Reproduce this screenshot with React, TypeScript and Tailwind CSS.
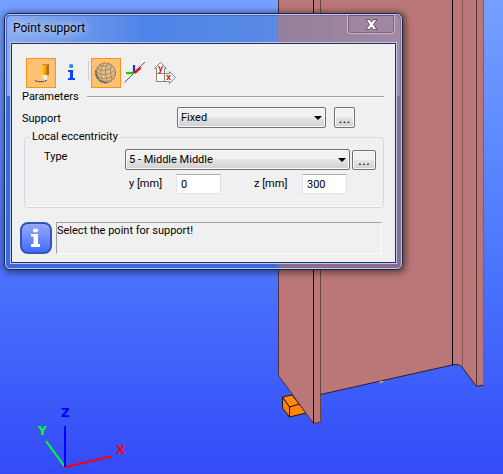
import type { ReactNode } from "react";

const face = "font-[Roboto,Tahoma,sans-serif]";

function Scene() {
  return (
    <svg
      className="absolute inset-0 h-full w-full"
      viewBox="0 0 503 474"
      preserveAspectRatio="xMinYMin slice"
      aria-label="Column with point support"
    >
      <g stroke="#2a1208" strokeWidth="1" strokeLinejoin="round">
        <path d="M282.500 397 L292 395 L300 405 L289.500 407 Z" fill="#ff8c0a" />
        <path d="M282.500 397 L289.500 407 V417 L282.500 408 Z" fill="#f98208" />
        <path d="M289.500 407 L299 404 L306 413 L289.500 417 Z" fill="#ff8400" />
      </g>
      <path
        d="M320 0 V394.500 L452 365 Q459 363.500 462 367 L476 386.500 L483.500 385 V0 Z"
        fill="#bb7777"
      />
      <path d="M278.500 0 V375 L313.500 423.500 L320.500 422 V0 Z" fill="#bb7777" />
      <g fill="none" stroke="#2c1c2c" strokeWidth="1">
        <path d="M278.500 0 V375.500 L313.500 423.500 L320.500 422" stroke="#53303a" />
        <path d="M320.500 0 V422" stroke="#6b4040" />
        <path d="M320.500 394.500 L452 365 Q459 363.500 462 367 L476.500 386.500 L483.500 385" />
        <path d="M313.500 0 V423 M452.500 0 V365" stroke="#000" />
        <path d="M462.500 0 V367" stroke="#8a5555" />
        <path d="M476.500 0 V386" stroke="#553434" />
        <path d="M483.500 0 V385" stroke="#8b5663" />
      </g>
      <path d="M379 381.500 L383.500 381 V382 L380 383 Z" fill="#f0a868" />
      <g fill="none" strokeWidth="2">
        <path d="M65 467 L111 456.500" stroke="#f00" />
        <path d="M65 467 L46 441" stroke="#0f2" />
        <path d="M65 467 V426" stroke="#00f" />
      </g>
      <g className="font-['DejaVu_Sans',Verdana,sans-serif] text-[12px] font-bold">
        <text x="61" y="417" fill="#0000f5">Z</text>
        <text x="38" y="435" fill="#0f2">Y</text>
        <text x="116" y="454" fill="#f00">X</text>
      </g>
    </svg>
  );
}

function Tool({ label, active, children }: { label: string; active?: boolean; children: ReactNode }) {
  return (
    <button
      type="button"
      aria-label={label}
      aria-pressed={!!active}
      className={
        active
          ? "h-[30px] w-[30px] border border-[#ff9214] bg-[#ffc274]"
          : "h-[30px] w-[30px]"
      }
    >
      {children}
    </button>
  );
}

function PencilIcon() {
  return (
    <svg viewBox="0 0 28 28" className="h-7 w-7">
      <path d="M8 21.500 C11 23.500 14 22.500 17 22.500" fill="none" stroke="#454545" strokeWidth="1" />
      <path d="M15 5 H18 V16 H15 Z" fill="#ffc61a" />
      <path d="M17 5 H20 V16 H17 Z" fill="#f5a300" />
      <path d="M19.500 5 H22 V16 H19.500 Z" fill="#b96a12" />
      <path d="M15 5 H22 V6 H15 Z" fill="#c98a3c" />
      <path d="M15 16 H22 L19.500 22 H17.500 Z" fill="#fbe9cc" />
      <path d="M20.500 16 H22 L19.500 22 Z" fill="#cdb79a" />
      <path d="M17.500 21 H19.800 L18.500 23 Z" fill="#41484c" />
    </svg>
  );
}

function InfoIcon() {
  return (
    <svg viewBox="0 0 30 30" className="h-[30px] w-[30px]">
      <ellipse cx="15.200" cy="8" rx="2.200" ry="2" fill="#2c83e8" />
      <path d="M12 12 H17 V20 H19 V22 H12 V20 H14 V14 H12 Z" fill="#0a43fa" />
    </svg>
  );
}

function SphereIcon() {
  return (
    <svg viewBox="0 0 28 28" className="h-7 w-7">
      <circle cx="13.500" cy="14" r="10" fill="#eabd82" stroke="#7a7060" strokeWidth="1" strokeDasharray="3 1" />
      <path
        d="M5 9 C9 13 17 12 21 7 M4 13 C9 17 18 16 23 11 M4 17 C10 21 19 20 23 15 M7 21 C13 23.500 19 22 22 19 M7 6 C10 8 15 7.500 18 5"
        fill="none" stroke="#857b69" strokeWidth="0.700"
      />
      <path
        d="M9 5 C3 12 5 18 9 22 M12 4 C7 11 8 19 13 24 M16 4 C12 11 13 19 17 23 M19 6 C18 11 19 17 20 21"
        fill="none" stroke="#857b69" strokeWidth="0.700"
      />
      <path d="M4 12 C4 19 9 24 15 23.500" fill="none" stroke="#4c4a45" strokeWidth="1.200" strokeDasharray="2 1" />
    </svg>
  );
}

function AxesIcon() {
  return (
    <svg viewBox="0 0 30 30" className="h-[30px] w-[30px]">
      <path d="M3.500 24.500 L24 4" stroke="#555" strokeWidth="1" />
      <path d="M5 15 H13" stroke="#1cc808" strokeWidth="2.200" />
      <path d="M13 7 V15" stroke="#1235ef" strokeWidth="2.200" />
      <path d="M13.500 15 L19.500 9.500" stroke="#f01024" strokeWidth="2.600" />
    </svg>
  );
}

function PlanIcon() {
  return (
    <svg viewBox="0 0 30 30" className="h-[30px] w-[30px]">
      <path
        d="M9.500 4.500 L15.500 10.500 H13.500 V15.500 H18.500 V13.500 L24.500 19.500 L18.500 25.500 V23.500 H5.500 V10.500 H3.500 Z"
        fill="#fafafa" stroke="#858585" strokeWidth="1"
      />
      <path d="M5.500 15.500 H13.500 V23.500" fill="none" stroke="#858585" strokeWidth="1" />
      <g className="font-['DejaVu_Sans',sans-serif] text-[8px] font-bold" fill="#e52505">
        <text x="7" y="13">y</text>
        <text x="15" y="22">x</text>
      </g>
    </svg>
  );
}

function Picker({ id, value }: { id: string; value: string }) {
  return (
    <div className="relative h-[21px] w-full">
      <select
        id={id}
        className="h-full w-full appearance-none rounded-xs border border-[#707070] bg-linear-to-b from-[#f2f2f2] from-45% via-[#e6e6e6] via-50% to-[#cfcfcf] pr-5 pl-[3px] leading-4 shadow-[inset_0_0_0_1px_#fafafa]"
      >
        <option>{value}</option>
      </select>
      <svg viewBox="0 0 8 4" className="pointer-events-none absolute top-[9px] right-1 h-1 w-2">
        <path d="M0 0 H8 L4 4 Z" fill="#000" />
      </svg>
    </div>
  );
}

const moreButton =
  "flex shrink-0 items-center justify-center rounded-xs border border-[#707070] bg-linear-to-b from-[#f2f2f2] from-45% via-[#e6e6e6] via-50% to-[#cfcfcf] text-[15px] leading-4 shadow-[inset_0_0_0_1px_#fafafa]";
const numberBox =
  "h-5 w-[45px] border border-[#e2e3ea] border-t-[#abadb3] bg-white pl-1 leading-4";

function Dialog() {
  return (
    <section
      aria-labelledby="dialog-title"
      className="relative mt-[13px] ml-1 w-[399px] rounded-md border border-[#1c2748] bg-linear-to-r from-[#3c68e2] from-68% to-[#8a6c8c] to-70% shadow-[1px_1px_6px_2px_rgba(0,0,0,0.45)]"
    >
      <div className="rounded-[5px] border border-[#b9c9ee] px-1 pb-1">
        <div className="absolute inset-x-[2px] top-[2px] h-20 rounded-t-sm bg-linear-to-r from-[#8aabef] via-[#4f84e8] via-35% to-[#5a8ae6] to-67%" />
        <div className="absolute top-[2px] right-[2px] h-20 w-[122px] rounded-tr-sm bg-linear-to-r from-[#95809c] via-[#9d839c] via-50% to-[#a38aa4]" />
        <header className="relative flex h-[27px] items-start justify-between pr-[2px] pl-[3px]">
          <h1 id="dialog-title" className="pt-1 text-[12px] leading-[18px] text-black [text-shadow:0_0_6px_#c5d8ff,0_0_10px_#c5d8ff]">
            Point support
          </h1>
          <button
            type="button"
            aria-label="Close"
            className="flex h-[19px] w-12 items-center justify-center rounded-b-sm border border-t-0 border-[#c9b6ca] shadow-[inset_0_0_0_1px_rgba(90,66,95,0.5)]"
          >
            <svg viewBox="0 0 13 11" className="h-[11px] w-[13px]">
              <path d="M1 0.500 H4.500 L6.500 3 L8.500 0.500 H12 L8.500 5.500 L12 10.500 H8.500 L6.500 8 L4.500 10.500 H1 L4.500 5.500 Z" fill="#fff" stroke="#5a4d64" strokeWidth="1" />
            </svg>
          </button>
        </header>
        <div className="relative border border-[#b9c9ee]">
          <div className="border border-[#263056] bg-[#f0f0f0] pt-[14px] pr-[11px] pb-2 pl-2">
            <div role="toolbar" aria-label="Support tools" className="flex pl-[6px]">
              <Tool label="Draw" active><PencilIcon /></Tool>
              <Tool label="Information"><InfoIcon /></Tool>
              <div className="mt-[3px] mr-[2px] ml-[2px] h-5 w-px bg-[#d0d0d0]" />
              <Tool label="Point" active><SphereIcon /></Tool>
              <Tool label="Local axes"><AxesIcon /></Tool>
              <Tool label="Plan directions"><PlanIcon /></Tool>
            </div>
            <div className="flex h-[19px] items-start gap-2 pl-[2px]">
              <h2 className="leading-[18px]">Parameters</h2>
              <div className="mt-2 h-[2px] grow border-t border-b border-t-[#a0a0a0] border-b-white" />
            </div>
            <div className="flex items-center pl-[2px]">
              <label htmlFor="support" className="w-[155px] pt-[2px] leading-4">Support</label>
              <div className="mr-2 w-[149px]"><Picker id="support" value="Fixed" /></div>
              <button type="button" aria-label="Edit support" className={`${moreButton} h-[21px] w-[21px]`}>...</button>
            </div>
            <fieldset className="mt-px ml-1 rounded-[3px] border border-[#d0dae3] pr-[7px] pb-[13px] pl-[19px] shadow-[inset_0_-1px_0_#fff]">
              <legend className="-ml-[14px] px-[2px] leading-4">Local eccentricity</legend>
              <div className="flex items-start gap-[2px] pt-1">
                <label htmlFor="type" className="w-[79px] shrink-0 leading-4">Type</label>
                <div className="grow"><Picker id="type" value="5 - Middle Middle" /></div>
                <button type="button" aria-label="Edit type" className={`${moreButton} mt-px h-5 w-6`}>...</button>
              </div>
              <div className="flex items-center pt-1 pl-[85px]">
                <label htmlFor="ecc-y" className="w-[47px] leading-4">y [mm]</label>
                <input id="ecc-y" defaultValue="0" className={numberBox} />
                <label htmlFor="ecc-z" className="ml-[33px] w-12 leading-4">z [mm]</label>
                <input id="ecc-z" defaultValue="300" className={numberBox} />
              </div>
            </fieldset>
            <div className="mt-[14px] flex gap-1 pr-[2px]">
              <svg viewBox="0 0 32 32" className="h-8 w-8 shrink-0" aria-hidden="true">
                <defs>
                  <linearGradient id="badge" x1="0" y1="0" x2="0" y2="1">
                    <stop offset="0" stopColor="#9aabff" />
                    <stop offset="1" stopColor="#4269fb" />
                  </linearGradient>
                </defs>
                <rect x="1" y="1" width="30" height="30" rx="7" fill="url(#badge)" stroke="#3457b4" strokeWidth="2" />
                <ellipse cx="15.500" cy="8.500" rx="2.700" ry="2" fill="#fff" />
                <path d="M11 12 H18 V22 H20 V25 H11 V22 H13.500 V14.500 H11 Z" fill="#fff" />
              </svg>
              <p role="status" className="h-8 grow border border-t-[#a0a0a0] border-r-white border-b-white border-l-[#a0a0a0] leading-4">
                Select the point for support!
              </p>
            </div>
          </div>
        </div>
      </div>
    </section>
  );
}

export default function App() {
  return (
    <main
      className={`relative flow-root min-h-screen overflow-hidden bg-linear-to-b from-[#75a0ff] to-[#344af8] text-[11px] text-black ${face}`}
    >
      <Scene />
      <Dialog />
    </main>
  );
}
